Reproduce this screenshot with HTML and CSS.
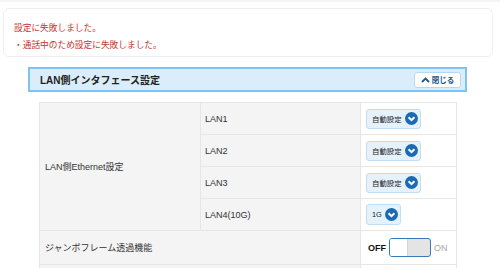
FILE: index.html
```html
<!DOCTYPE html>
<html lang="ja">
<head>
<meta charset="utf-8">
<link rel="stylesheet" href="styles.css">
</head>
<body>
<div class="topline"></div>
<div class="error">
  <p>設定に失敗しました。</p>
  <p>・通話中のため設定に失敗しました。</p>
</div>
<div class="section">
  <div class="section-head">
    <h2>LAN側インタフェース設定</h2>
    <button class="close"><svg width="9" height="6" viewBox="0 0 9 6"><path d="M1 5 L4.5 1.5 L8 5" fill="none" stroke="#1d5794" stroke-width="1.8"/></svg>閉じる</button>
  </div>
  <table class="tbl">
    <tr>
      <th class="lbl" rowspan="4">LAN側Ethernet設定</th>
      <th class="sub">LAN1</th>
      <td class="val"><span class="sel">自動設定<i class="dd"><svg width="13" height="13" viewBox="0 0 13 13"><circle cx="6.5" cy="6.5" r="6.5" fill="#1c6ab2"/><path d="M3.6 5.2 L6.5 8.1 L9.4 5.2" fill="none" stroke="#fff" stroke-width="2"/></svg></i></span></td>
    </tr>
    <tr class="r2">
      <th class="sub">LAN2</th>
      <td class="val"><span class="sel">自動設定<i class="dd"><svg width="13" height="13" viewBox="0 0 13 13"><circle cx="6.5" cy="6.5" r="6.5" fill="#1c6ab2"/><path d="M3.6 5.2 L6.5 8.1 L9.4 5.2" fill="none" stroke="#fff" stroke-width="2"/></svg></i></span></td>
    </tr>
    <tr class="r3">
      <th class="sub">LAN3</th>
      <td class="val"><span class="sel">自動設定<i class="dd"><svg width="13" height="13" viewBox="0 0 13 13"><circle cx="6.5" cy="6.5" r="6.5" fill="#1c6ab2"/><path d="M3.6 5.2 L6.5 8.1 L9.4 5.2" fill="none" stroke="#fff" stroke-width="2"/></svg></i></span></td>
    </tr>
    <tr class="r4">
      <th class="sub">LAN4(10G)</th>
      <td class="val"><span class="sel short">1G<i class="dd"><svg width="13" height="13" viewBox="0 0 13 13"><circle cx="6.5" cy="6.5" r="6.5" fill="#1c6ab2"/><path d="M3.6 5.2 L6.5 8.1 L9.4 5.2" fill="none" stroke="#fff" stroke-width="2"/></svg></i></span></td>
    </tr>
    <tr class="r5">
      <th class="lbl" colspan="2">ジャンボフレーム透過機能</th>
      <td class="val"><span class="toggle"><b class="off">OFF</b><span class="sw"><span class="knob"></span></span><span class="on">ON</span></span></td>
    </tr>
    <tr class="r6">
      <th class="lbl" colspan="2"></th>
      <td class="val"></td>
    </tr>
  </table>
</div>
</body>
</html>
```

FILE: styles.css
```css
html, body {
  margin: 0;
  padding: 0;
  background: #fff;
  font-family: "Liberation Sans", "Noto Sans CJK JP", sans-serif;
  color: #222;
}
.topline {
  height: 2px;
  background: #f4f4f4;
}
.error {
  margin: 6px 7px 0 3px;
  height: 49px;
  border: 1px solid #efefef;
  border-radius: 6px;
  padding: 11px 0 0 10px;
  box-sizing: border-box;
  color: #c6342c;
  font-size: 8.7px;
  line-height: 17px;
}
.error p {
  margin: 0;
}
.section {
  margin: 10px 0 0 28px;
  width: 439px;
}
.section-head {
  height: 25px;
  box-sizing: border-box;
  background: #dbedfb;
  border: 2px solid #7ec3f4;
  display: flex;
  align-items: center;
  justify-content: space-between;
  padding: 0 4px 0 10px;
}
.section-head h2 {
  margin: 0;
  font-size: 10px;
  font-weight: bold;
  color: #222;
}
.close {
  height: 16px;
  width: 47px;
  box-sizing: border-box;
  background: #fff;
  border: 1px solid #b4d9f5;
  border-radius: 3px;
  display: flex;
  align-items: center;
  justify-content: center;
  gap: 2px;
  padding: 0;
  font-family: inherit;
  font-size: 7.5px;
  font-weight: bold;
  color: #1d5794;
}
.tbl {
  margin: 10px 0 0 11px;
  width: 418px;
  border-collapse: collapse;
  font-size: 9px;
}
.tbl th, .tbl td {
  border: 1px solid #e6e6e6;
  padding: 0;
  text-align: left;
  font-weight: normal;
  height: 31px;
}
.tbl .lbl {
  width: 155px;
  padding-left: 5px;
  background: #f4f4f4;
  color: #333;
}
.tbl .sub {
  width: 155px;
  padding-left: 4px;
  background: #f4f4f4;
  color: #333;
}
.tbl .val {
  padding-left: 5px;
  background: #fff;
}
.tbl .r5 th, .tbl .r5 td { height: 33px; }
.tbl .r6 th, .tbl .r6 td { height: 30px; }
.sel {
  display: inline-flex;
  align-items: center;
  height: 20px;
  width: 55px;
  box-sizing: border-box;
  padding: 0 0 0 5px;
  gap: 3px;
  background: #e5f2fc;
  border: 1px solid #c0def5;
  border-radius: 3px;
  font-size: 7.4px;
  color: #222;
  vertical-align: middle;
}
.sel.short {
  width: 35px;
  height: 21px;
}
.dd {
  display: flex;
}
.toggle {
  display: inline-flex;
  align-items: center;
  vertical-align: middle;
  gap: 3px;
  margin-left: 2px;
}
.off {
  font-size: 9px;
  font-weight: bold;
  color: #111;
}
.sw {
  display: flex;
  width: 42px;
  height: 19px;
  box-sizing: border-box;
  border: 1.5px solid #3b77bb;
  border-radius: 3px;
  background: #e4e4e4;
  overflow: hidden;
}
.knob {
  width: 17px;
  height: 100%;
  background: #fff;
  border-right: 1px solid #d6d6d6;
}
.on {
  font-size: 9px;
  color: #a8a8a8;
}
```
